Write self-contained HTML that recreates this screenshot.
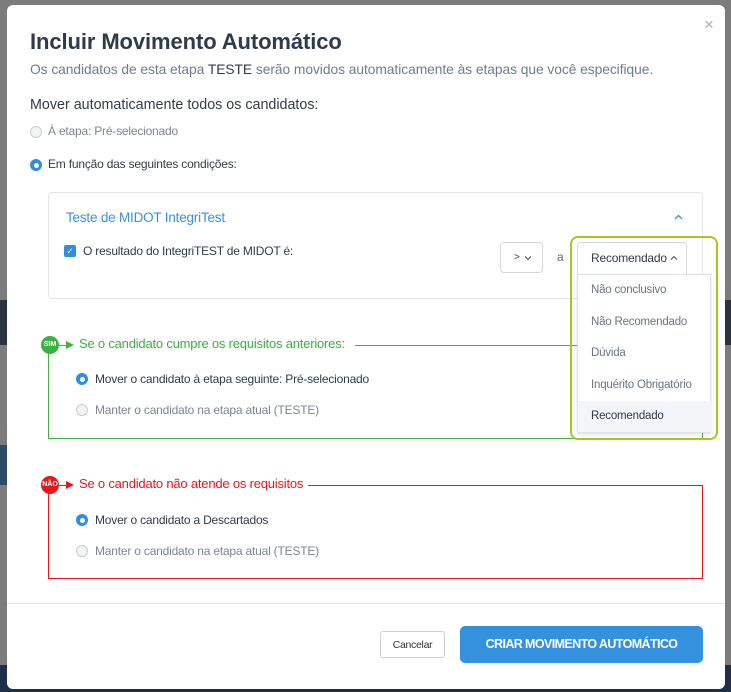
<!DOCTYPE html>
<html><head><meta charset="utf-8"><style>
*{box-sizing:border-box;margin:0;padding:0}
body{width:731px;height:692px;overflow:hidden;background:#7c7c7c;font-family:"Liberation Sans",sans-serif;position:relative}
.abs{position:absolute}
.modal{position:absolute;left:7px;top:5px;width:718px;height:684px;background:#fff;border-radius:6px}
.t{position:absolute;white-space:nowrap}
.radio{position:absolute;width:12px;height:12px;border-radius:50%;border:1px solid #c8ccd2;background:#f2f3f5}
.radio.on{border:none;background:#2f8ee0}
.radio.on:after{content:"";position:absolute;left:3.5px;top:3.5px;width:5px;height:5px;border-radius:50%;background:#fff}
.item{position:absolute;left:0;width:133px;height:31px;padding-left:13px;line-height:31px;font-size:11.5px;color:#6b7483;letter-spacing:-0.2px}
</style></head><body>
<div class="abs" style="left:0;top:300px;width:7px;height:45px;background:#2b3340"></div>
<div class="abs" style="left:724px;top:300px;width:7px;height:45px;background:#2b3340"></div>
<div class="abs" style="left:0;top:445px;width:7px;height:40px;background:#2d4a66"></div>
<div class="abs" style="left:0;top:665px;width:731px;height:27px;background:#1e2f47"></div>
<div class="modal"></div>
<div class="t" style="left:704px;top:15px;font-size:17px;color:#a8adb5">×</div>
<div class="t" style="left:30px;top:29px;font-size:22px;font-weight:bold;color:#2f3a4c;letter-spacing:-0.1px">Incluir Movimento Automático</div>
<div class="t" style="left:30px;top:62px;font-size:13.8px;color:#6d7c90;letter-spacing:-0.05px">Os candidatos de esta etapa <span style="color:#2f3a4c">TESTE</span> serão movidos automaticamente às etapas que você especifique.</div>
<div class="t" style="left:30px;top:97px;font-size:14.3px;color:#333b48">Mover automaticamente todos os candidatos:</div>
<div class="radio" style="left:30px;top:126px"></div>
<div class="t" style="left:48px;top:124px;font-size:12px;color:#7b8594;letter-spacing:-0.2px">À etapa: Pré-selecionado</div>
<div class="radio on" style="left:30px;top:159px"></div>
<div class="t" style="left:48px;top:157px;font-size:12px;color:#333b48;letter-spacing:-0.2px">Em função das seguintes condições:</div>
<div class="abs" style="left:48px;top:192px;width:655px;height:107px;border:1px solid #e3e6ea;border-radius:4px"></div>
<div class="t" style="left:66px;top:210px;font-size:13.5px;color:#3a8fdc;letter-spacing:-0.2px">Teste de MIDOT IntegriTest</div>
<svg class="abs" style="left:674px;top:214px" width="9" height="6"><path d="M1 5L4.5 1.5L8 5" stroke="#3a8fdc" stroke-width="1.3" fill="none"/></svg>
<div class="abs" style="left:64px;top:245px;width:12px;height:12px;border-radius:2px;background:#2f8ee0;color:#fff;font-size:9px;line-height:12px;text-align:center">✓</div>
<div class="t" style="left:83px;top:244px;font-size:12px;color:#333b48;letter-spacing:-0.2px">O resultado do IntegriTEST de MIDOT é:</div>
<div class="abs" style="left:500px;top:242px;width:43px;height:31px;border:1px solid #d5d9df;border-radius:4px;font-size:10px;color:#444;line-height:29px;padding-left:13px">&gt;</div>
<svg class="abs" style="left:524px;top:255px" width="8" height="6"><path d="M1 1.5L4 4.5L7 1.5" stroke="#555" stroke-width="1.1" fill="none"/></svg>
<div class="t" style="left:557px;top:250px;font-size:12px;color:#666">a</div>
<!-- green section -->
<div class="abs" style="left:48px;top:345px;width:655px;height:94px;border:1px solid #43b047;border-top:none"></div>
<div class="abs" style="left:355px;top:345px;width:348px;height:1px;background:#43b047"></div>
<div class="abs" style="left:41px;top:336px;width:18px;height:18px;border-radius:50%;background:#3cb043;color:#fff;font-size:7px;font-weight:bold;line-height:18px;text-align:center">SIM</div>
<div class="abs" style="left:59px;top:345px;width:8px;height:1px;background:#43b047"></div>
<div class="abs" style="left:66px;top:341px;border-left:8px solid #43b047;border-top:4px solid transparent;border-bottom:4px solid transparent"></div>
<div class="t" style="left:79px;top:336px;font-size:13px;color:#3cae40;background:#fff;padding-right:4px;letter-spacing:-0.2px">Se o candidato cumpre os requisitos anteriores:</div>
<div class="radio on" style="left:76px;top:373px"></div>
<div class="t" style="left:95px;top:372px;font-size:12px;color:#333b48;letter-spacing:-0.2px">Mover o candidato à etapa seguinte: Pré-selecionado</div>
<div class="radio" style="left:76px;top:404px"></div>
<div class="t" style="left:95px;top:403px;font-size:12px;color:#7b8594;letter-spacing:-0.2px">Manter o candidato na etapa atual (TESTE)</div>
<!-- red section -->
<div class="abs" style="left:48px;top:485px;width:655px;height:94px;border:1px solid #e8161b;border-top:none"></div>
<div class="abs" style="left:308px;top:485px;width:395px;height:1px;background:#e8161b"></div>
<div class="abs" style="left:41px;top:476px;width:18px;height:18px;border-radius:50%;background:#e8161b;color:#fff;font-size:7px;font-weight:bold;line-height:18px;text-align:center">NÃO</div>
<div class="abs" style="left:59px;top:485px;width:8px;height:1px;background:#e8161b"></div>
<div class="abs" style="left:66px;top:481px;border-left:8px solid #e8161b;border-top:4px solid transparent;border-bottom:4px solid transparent"></div>
<div class="t" style="left:79px;top:476px;font-size:13px;color:#e8161b;background:#fff;padding-right:4px;letter-spacing:-0.2px">Se o candidato não atende os requisitos</div>
<div class="radio on" style="left:76px;top:514px"></div>
<div class="t" style="left:95px;top:513px;font-size:12px;color:#333b48;letter-spacing:-0.2px">Mover o candidato a Descartados</div>
<div class="radio" style="left:76px;top:545px"></div>
<div class="t" style="left:95px;top:544px;font-size:12px;color:#7b8594;letter-spacing:-0.2px">Manter o candidato na etapa atual (TESTE)</div>
<!-- dropdown -->
<div class="abs" style="left:570px;top:236px;width:148px;height:204px;border:2px solid #a5c820;border-radius:8px;background:transparent"></div>
<div class="abs" style="left:577px;top:242px;width:110px;height:33px;border:1px solid #d5d9df;border-radius:4px 4px 0 0;background:#fff;font-size:12px;color:#333b48;line-height:31px;padding-left:13px;letter-spacing:-0.2px">Recomendado</div>
<svg class="abs" style="left:670px;top:255px" width="8" height="6"><path d="M1 4.5L4 1.5L7 4.5" stroke="#555" stroke-width="1.1" fill="none"/></svg>
<div class="abs" style="left:577px;top:274px;width:134px;height:159px;border:1px solid #dde1e6;background:#fff;box-shadow:0 2px 4px rgba(0,0,0,.1)">
<div class="item" style="top:0">Não conclusivo</div>
<div class="item" style="top:32px">Não Recomendado</div>
<div class="item" style="top:63px">Dúvida</div>
<div class="item" style="top:95px">Inquérito Obrigatório</div>
<div class="item" style="top:126px;background:#f3f5f8;color:#333b48">Recomendado</div>
</div>
<!-- footer -->
<div class="abs" style="left:7px;top:603px;width:718px;height:1px;background:#e5e7ea"></div>
<div class="abs" style="left:380px;top:631px;width:65px;height:27px;border:1px solid #ccd0d5;border-radius:3px;font-size:10.5px;color:#333;line-height:26px;text-align:center;letter-spacing:-0.3px">Cancelar</div>
<div class="abs" style="left:460px;top:626px;width:243px;height:37px;border-radius:5px;background:#3491de;color:#fff;font-size:12.5px;font-weight:bold;line-height:37px;text-align:center;letter-spacing:-0.6px">CRIAR MOVIMENTO AUTOMÁTICO</div>
</body></html>
